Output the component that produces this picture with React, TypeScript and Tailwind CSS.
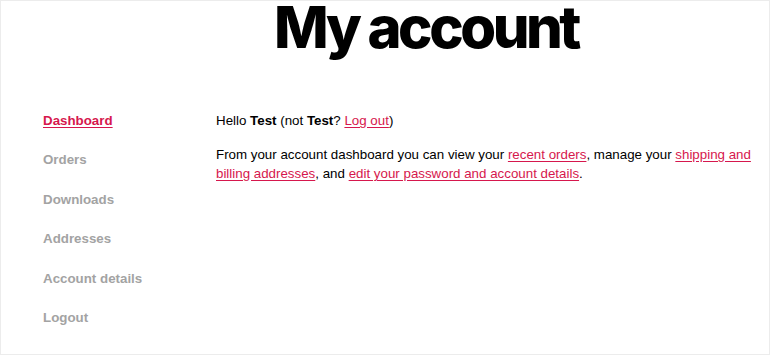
import React from 'react';

const navItems = ['Dashboard', 'Orders', 'Downloads', 'Addresses', 'Account details', 'Logout'];

function Link({ children }: { children: React.ReactNode }) {
  return <a href="#" className="text-[#d6174d] underline underline-offset-2">{children}</a>;
}

export default function App() {
  return (
    <div className="w-[770px] h-[355px] border border-[#ececec] bg-white overflow-hidden font-['Liberation_Sans',Arial,sans-serif]">
      <h1 className="pl-[82px] text-center font-['Inter',sans-serif] font-extrabold text-[58px] leading-none tracking-[-0.06em] text-black -mt-[3px]">
        My account
      </h1>
      <div className="flex mt-[55px]">
        <nav className="w-[215px] pl-[42px] pt-[2px] shrink-0">
          <ul className="flex flex-col gap-[24.4px]">
            {navItems.map((item, i) => (
              <li key={item} className="text-[13.33px] leading-[15px] font-bold">
                <a
                  href="#"
                  className={i === 0 ? 'text-[#d6174d] underline underline-offset-2' : 'text-[#a3a3a3]'}
                >
                  {item}
                </a>
              </li>
            ))}
          </ul>
        </nav>
        <div className="flex-1 pr-[16px] text-[13.33px] leading-[19px] text-black">
          <p>
            Hello <strong>Test</strong> (not <strong>Test</strong>? <Link>Log out</Link>)
          </p>
          <p className="mt-[15px]">
            From your account dashboard you can view your <Link>recent orders</Link>, manage your{' '}
            <Link>shipping and billing addresses</Link>, and <Link>edit your password and account details</Link>.
          </p>
        </div>
      </div>
    </div>
  );
}
